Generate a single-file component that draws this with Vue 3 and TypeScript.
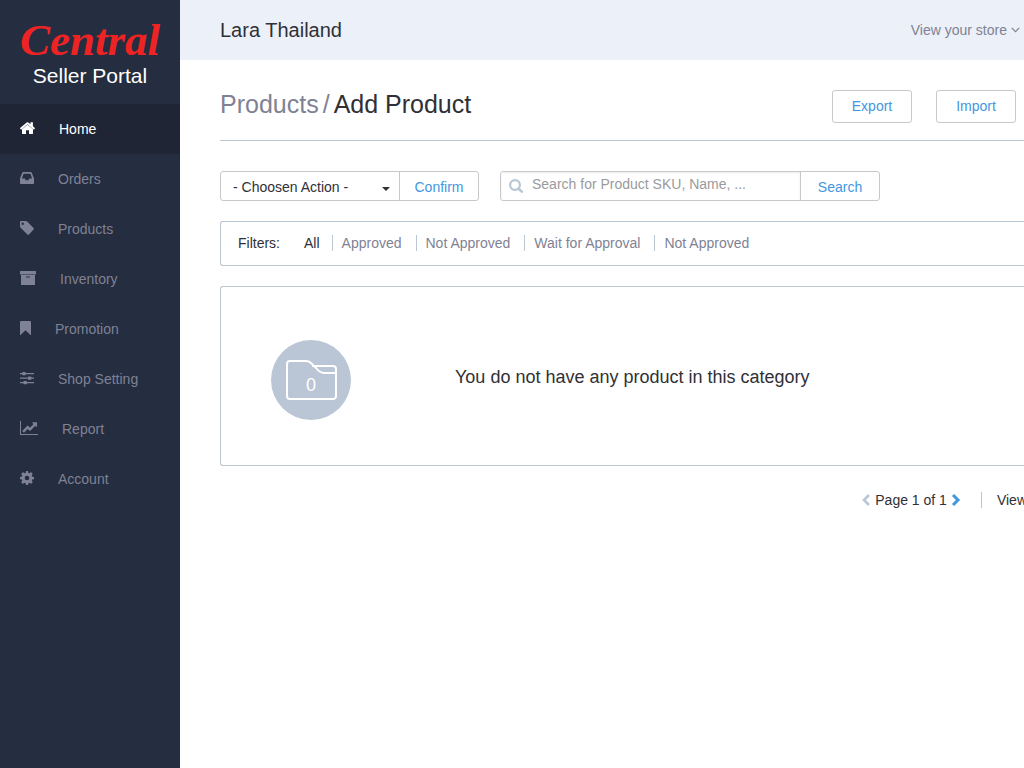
<script setup lang="ts">
import { ref } from 'vue'

interface NavItem {
  label: string
  width: number
  path: string
}

const navItems: NavItem[] = [
  {
    label: 'Home',
    width: 15,
    path: 'M7.5 3.8 13 8.300v4.100q0 .6-.6.6H9V9.300H6V13H2.600q-.6 0-.6-.6V8.300ZM1 8.500.1 7.500q-.2-.2 0-.4L6.700 1.500q.8-.7 1.600 0L10.500 3.300V1.300h2.400v4l2 1.800q.2.200 0 .4L14 8.500q-.2.200-.4 0L7.500 3.300 1.400 8.500q-.2.200-.4 0Z'
  },
  {
    label: 'Orders',
    width: 14,
    path: 'M3.200 1h7.600q.7 0 1 .7L14 7.500v4.800q0 .7-.7.700H.7Q0 13 0 12.300V7.500L2.200 1.700q.3-.7 1-.7ZM3.600 2.700 1.900 7.500h2.900l.9 1.800h2.600l.9-1.800h2.900l-1.700-4.800Z'
  },
  {
    label: 'Products',
    width: 14,
    path: 'M0 1.200Q0 0 1.200 0H5.500q1 0 1.700.6l6.300 6.300q.8.800 0 1.600L9 13.400q-.8.700-1.600 0L.6 6.800Q0 6.100 0 5.200ZM2.700 1.500a1.200 1.200 0 1 0 0 2.400 1.200 1.200 0 0 0 0-2.400Z'
  },
  {
    label: 'Inventory',
    width: 16,
    path: 'M.6 0h14.800q.6 0 .6.600v2.800H0V.6Q0 0 .6 0ZM1 4.100h14v9.300q0 .6-.6.600H1.600q-.6 0-.6-.6ZM6.500 5.600q-.5 0-.5.500t.5.500h3q.5 0 .5-.5t-.5-.5Z'
  },
  {
    label: 'Promotion',
    width: 11,
    path: 'M1.200 0h8.800Q11 0 11 1.200V14h-.6L5.500 9.300.6 14H0V1.200Q0 0 1.200 0Z'
  },
  {
    label: 'Shop Setting',
    width: 14,
    path: 'M0 2h2.300V1.500q0-.5.500-.5h2.400q.5 0 .5.500V2H14v1.200H5.700v.6q0 .5-.5.500H2.800q-.5 0-.5-.5v-.6H0ZM0 6.500h8V6q0-.5.500-.5h2.400q.5 0 .5.500v.5H14v1.200h-2.600v.6q0 .5-.5.500H8.500Q8 8.800 8 8.300v-.6H0ZM0 11h3.500v-.5q0-.5.500-.5h2.400q.5 0 .5.500v.5H14v1.200H6.900v.6q0 .5-.5.500H4q-.5 0-.5-.5v-.6H0Z'
  },
  {
    label: 'Report',
    width: 18,
    path: 'M0 0h1v13h17v1H0ZM17 1.500v4.300q0 .6-.5.200l-1.200-1.200-5 5q-.3.300-.6 0L7.700 7.900 3.900 11.700 2.200 10 7.400 4.800q.3-.3.600 0L10 6.700l3.600-3.600-1.200-1.200q-.4-.6.200-.6h4.100q.3 0 .3.200Z'
  },
  {
    label: 'Account',
    width: 14,
    path: 'M5.900.2Q6 0 6.200 0h1.600q.3 0 .3.200l.3 1.700 1 .4L10.800 1.300q.2-.2.400 0l1.400 1.400q.2.200 0 .400L11.600 4.500l.5 1.100 1.700.3q.2 0 .2.300v1.700q0 .3-.2.300l-1.700.3-.4 1 1 1.400q.2.200 0 .4l-1.500 1.500q-.2.100-.4 0l-1.300-1-1.100.4-.3 1.600q0 .2-.3.200H6.200q-.3 0-.3-.2l-.3-1.600-1-.4-1.400 1q-.2.100-.4 0L1.300 11.400q-.1-.2 0-.4l1-1.400-.4-1.100-1.700-.3Q0 8.200 0 7.900V6.200q0-.3.200-.3l1.700-.3.400-1-1-1.400q-.2-.2 0-.4L2.800 1.300q.2-.2.400 0l1.300 1 1.100-.4ZM7 4.700a2.300 2.300 0 1 0 0 4.600 2.300 2.300 0 0 0 0-4.600Z'
  }
]

const filters: string[] = ['All', 'Approved', 'Not Approved', 'Wait for Approval', 'Not Approved']

const activeNav = ref(0)
const activeFilter = ref(0)
const action = ref('')
const query = ref('')
</script>

<template>
  <div class="page">
    <aside class="sidebar">
      <a href="#" class="brand">
        <span class="brand-name">Central</span>
        <span class="brand-sub">Seller Portal</span>
      </a>
      <nav>
        <a
          v-for="(item, i) in navItems"
          :key="item.label"
          href="#"
          class="nav-item"
          :class="{ active: i === activeNav }"
          @click.prevent="activeNav = i"
        >
          <svg :width="item.width" height="16" :viewBox="`0 0 ${item.width} 16`" aria-hidden="true">
            <path :d="item.path" fill="currentColor" fill-rule="evenodd" />
          </svg>
          <span>{{ item.label }}</span>
        </a>
      </nav>
    </aside>

    <div class="content">
      <header class="topbar">
        <div class="shop">Lara Thailand</div>
        <button type="button" class="store">
          View your store
          <svg width="9" height="6" viewBox="0 0 9 6" aria-hidden="true">
            <path d="M.7.8 4.500 4.600 8.300.8" fill="none" stroke="currentColor" stroke-width="1.200" />
          </svg>
        </button>
      </header>

      <main class="main">
        <div class="heading">
          <h1><a href="#">Products</a><span class="slash">/</span>Add Product</h1>
          <div class="heading-actions">
            <button type="button" class="btn">Export</button>
            <button type="button" class="btn">Import</button>
          </div>
        </div>

        <div class="tools">
          <form class="group" @submit.prevent>
            <div class="select-wrap">
              <select v-model="action" aria-label="Action">
                <option value="">- Choosen Action -</option>
              </select>
              <svg class="caret" width="8" height="4" viewBox="0 0 8 4" aria-hidden="true">
                <path d="M0 0h8L4 4Z" fill="currentColor" />
              </svg>
            </div>
            <button type="submit" class="addon">Confirm</button>
          </form>

          <form class="group search" @submit.prevent>
            <label class="search-box">
              <svg width="14" height="14" viewBox="0 0 14 14" aria-hidden="true">
                <circle cx="6" cy="6" r="4.900" fill="none" stroke="currentColor" stroke-width="2.200" />
                <path d="m9.500 9.500 3.200 3.200" stroke="currentColor" stroke-width="2.600" stroke-linecap="round" />
              </svg>
              <input v-model="query" type="text" aria-label="Search products" placeholder="Search for Product SKU, Name, ..." />
            </label>
            <button type="submit" class="addon">Search</button>
          </form>
        </div>

        <div class="filters">
          <span class="filters-label">Filters:</span>
          <button
            v-for="(f, i) in filters"
            :key="i"
            type="button"
            class="filter"
            :class="{ active: i === activeFilter }"
            @click="activeFilter = i"
          >{{ f }}</button>
        </div>

        <section class="empty">
          <div class="badge">
            <svg width="80" height="80" viewBox="0 0 80 80" aria-hidden="true">
              <g fill="none" stroke="#fff" stroke-width="2">
                <path d="M41 26h21q3 0 3 3v27q0 3-3 3H19q-3 0-3-3V24q0-3 3-3h16q3 0 5 2l5 5q4 5 8 5h12" />
              </g>
              <text x="40" y="51" text-anchor="middle" fill="#fff">0</text>
            </svg>
          </div>
          <p>You do not have any product in this category</p>
        </section>

        <footer class="pager">
          <button type="button" class="arrow prev" aria-label="Previous page">
            <svg width="10" height="12" viewBox="0 0 10 12" aria-hidden="true">
              <path d="M8 1 3 6l5 5" fill="none" stroke="currentColor" stroke-width="2.600" />
            </svg>
          </button>
          <span class="page-text">Page 1 of 1</span>
          <button type="button" class="arrow next" aria-label="Next page">
            <svg width="10" height="12" viewBox="0 0 10 12" aria-hidden="true">
              <path d="m2 1 5 5-5 5" fill="none" stroke="currentColor" stroke-width="3" />
            </svg>
          </button>
          <span class="view">View</span>
        </footer>
      </main>
    </div>
  </div>
</template>

<style>
body {
  background: #fff;
}
</style>

<style scoped>
.page,
.page * {
  box-sizing: border-box;
}
.page {
  display: flex;
  min-height: 100vh;
  overflow: hidden;
  color: #303036;
  font: 14px/20px "Liberation Sans", Arial, sans-serif;
}
button,
input,
select {
  margin: 0;
  padding: 0;
  border: 0;
  background: none;
  color: inherit;
  font: inherit;
}
button {
  cursor: pointer;
}
a {
  color: inherit;
  text-decoration: none;
}
.sidebar {
  flex: 0 0 180px;
  background: #252d40;
  color: #7f8294;
}
.brand {
  display: flex;
  flex-direction: column;
  align-items: center;
  height: 104px;
  padding-top: 16px;
  color: #fff;
}
.brand-name {
  color: #ee2424;
  font: italic bold 45px/48px "Liberation Serif", serif;
}
.brand-sub {
  font-size: 21px;
  line-height: 24px;
}
.nav-item {
  display: flex;
  align-items: center;
  gap: 24px;
  height: 50px;
  padding: 0 20px;
}
.nav-item.active {
  background: #1f2535;
  color: #fff;
}
.content {
  flex: 1;
  min-width: 0;
}
.topbar {
  display: flex;
  align-items: center;
  justify-content: space-between;
  height: 60px;
  padding: 0 4px 0 40px;
  background: #ecf0f9;
}
.shop {
  font-size: 20px;
}
.store {
  display: flex;
  align-items: center;
  gap: 4px;
  color: #7f8294;
}
.main {
  padding: 30px 0 0 40px;
}
.heading {
  display: flex;
  justify-content: space-between;
  height: 51px;
  padding-right: 8px;
  border-bottom: 1px solid #b9c6d4;
}
h1 {
  margin: 0;
  font-size: 25px;
  line-height: 28px;
  font-weight: normal;
}
h1 a,
.slash {
  color: #7f8294;
}
.slash {
  padding: 0 4px;
}
.heading-actions {
  display: flex;
  gap: 24px;
}
.btn {
  width: 80px;
  height: 33px;
  padding-bottom: 2px;
  border: 1px solid #c8c8cb;
  border-radius: 3px;
  color: #4397df;
}
.tools {
  display: flex;
  gap: 21px;
  margin-top: 30px;
}
.group {
  display: flex;
  height: 30px;
  border: 1px solid #c8c8cb;
  border-radius: 3px;
}
.search {
  flex: 0 1 380px;
}
.select-wrap {
  position: relative;
  display: flex;
  width: 178px;
}
select {
  width: 100%;
  padding: 2px 24px 0 12px;
  appearance: none;
}
.caret {
  position: absolute;
  right: 9px;
  top: 15px;
  pointer-events: none;
}
.addon {
  flex: 0 0 79px;
  padding-top: 2px;
  border-left: 1px solid #c8c8cb;
  color: #4397df;
}
.search-box {
  display: flex;
  flex: 1;
  align-items: center;
  gap: 9px;
  min-width: 0;
  padding-left: 8px;
  box-shadow: inset 0 1px 2px #ececec;
  color: #b9c6d4;
}
input {
  flex: 1;
  min-width: 0;
  height: 24px;
  padding-bottom: 4px;
  outline: 0;
  color: #303036;
}
input::placeholder {
  color: #9a9a9c;
  opacity: 1;
}
.filters {
  display: flex;
  align-items: center;
  height: 45px;
  margin-top: 20px;
  padding: 0 0 2px 17px;
  border: 1px solid #b9c6d4;
  border-right: 0;
  border-radius: 3px 0 0 3px;
}
.filters-label {
  margin-right: 15px;
}
.filter {
  height: 16px;
  padding: 0 14px 0 9px;
  border-right: 1px solid #b9c6d4;
  line-height: 16px;
  color: #7f8294;
}
.filter:last-child {
  border-right: 0;
}
.filter.active {
  padding-right: 12px;
  color: #303036;
}
.empty {
  display: flex;
  align-items: center;
  gap: 104px;
  height: 180px;
  margin-top: 20px;
  padding: 8px 0 0 50px;
  border: 1px solid #b9c6d4;
  border-right: 0;
  border-radius: 3px 0 0 3px;
}
.badge {
  width: 80px;
  height: 80px;
  border-radius: 50%;
  background: #bac6d5;
}
.badge svg {
  display: block;
}
.badge text {
  font-size: 18px;
}
.empty p {
  margin: 0;
  padding-bottom: 6px;
  font-size: 18px;
  line-height: 24px;
}
.pager {
  display: flex;
  align-items: center;
  justify-content: flex-end;
  margin: 24px -3px 0 0;
}
.arrow {
  display: flex;
}
.prev {
  color: #bac6d5;
}
.next {
  color: #4397df;
}
.page-text {
  padding: 0 4px;
}
.view {
  margin-left: 20px;
  padding-left: 15px;
  border-left: 1px solid #b9c6d4;
  line-height: 16px;
}
</style>
